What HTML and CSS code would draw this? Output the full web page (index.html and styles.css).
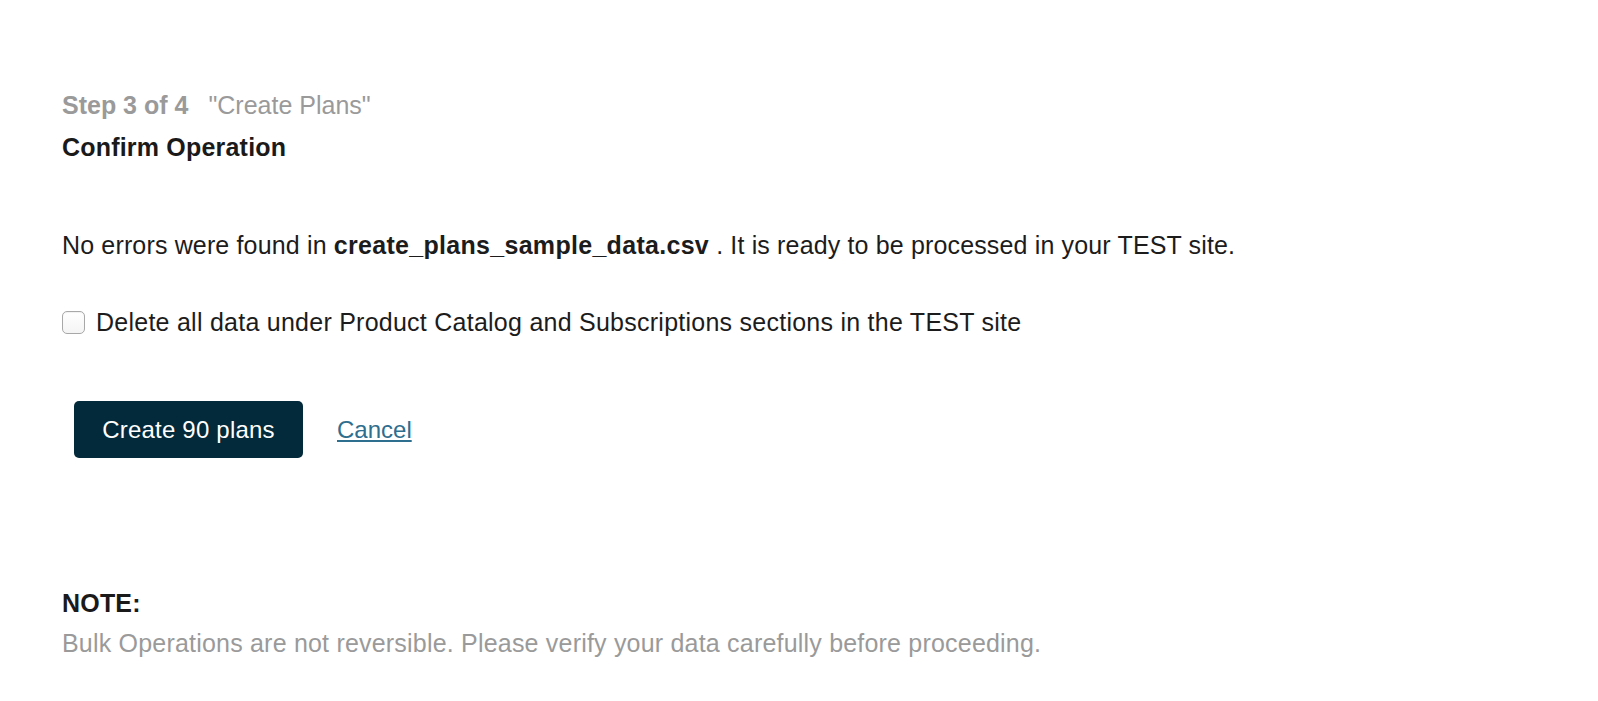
FILE: index.html
```html
<!DOCTYPE html>
<html lang="en">
<head>
<meta charset="utf-8">
<title>Confirm Operation</title>
<link rel="stylesheet" href="styles.css">
</head>
<body>
<main class="page">
  <div class="step"><span class="step-num">Step 3 of 4</span><span class="step-name">"Create Plans"</span></div>
  <h1 class="title">Confirm Operation</h1>
  <p class="message">No errors were found in <strong>create_plans_sample_data.csv</strong> . It is ready to be processed in your TEST site.</p>
  <label class="check-row"><input type="checkbox" class="check"><span>Delete all data under Product Catalog and Subscriptions sections in the TEST site</span></label>
  <div class="actions">
    <button class="btn-primary" type="button">Create 90 plans</button>
    <a class="cancel" href="#">Cancel</a>
  </div>
  <section class="note">
    <h2 class="note-title">NOTE:</h2>
    <p class="note-text">Bulk Operations are not reversible. Please verify your data carefully before proceeding.</p>
  </section>
</main>
</body>
</html>
```

FILE: styles.css
```css
html, body {
  margin: 0;
  padding: 0;
  background: #ffffff;
}
body {
  font-family: "Liberation Sans", Arial, sans-serif;
  font-size: 25px;
  letter-spacing: 0.2px;
  color: #1c1c1c;
}
.page {
  padding: 84px 0 0 62px;
}
.step {
  line-height: 42px;
  color: #9a9a9a;
  display: flex;
  gap: 20px;
  letter-spacing: 0;
}
.step-num {
  font-weight: bold;
}
.title {
  margin: 0;
  font-size: 25px;
  line-height: 42px;
  font-weight: bold;
  color: #1a1a1a;
}
.message {
  margin: 56px 0 0;
  line-height: 42px;
  letter-spacing: 0.15px;
}
.message strong {
  font-weight: bold;
  letter-spacing: 0.3px;
}
.check-row {
  margin-top: 35px;
  display: flex;
  align-items: center;
  gap: 11px;
  line-height: 42px;
  letter-spacing: 0.25px;
}
.check {
  appearance: none;
  -webkit-appearance: none;
  margin: 0;
  width: 23px;
  height: 23px;
  border: 1px solid #a8a8a8;
  border-radius: 5px;
  background: linear-gradient(#ffffff, #f4f4f4);
  box-shadow: inset 0 1px 1px rgba(0, 0, 0, 0.06);
  box-sizing: border-box;
}
.actions {
  margin: 58px 0 0 12px;
  display: flex;
  align-items: center;
  gap: 34px;
}
.btn-primary {
  width: 229px;
  height: 57px;
  border: none;
  border-radius: 5px;
  background: #032a3a;
  color: #ffffff;
  font-family: "Liberation Sans", Arial, sans-serif;
  font-size: 24px;
  letter-spacing: 0.2px;
  padding: 0;
}
.cancel {
  color: #2e6e8e;
  font-size: 24px;
  letter-spacing: 0;
  text-decoration: underline;
}
.note {
  margin-top: 125px;
  line-height: 40px;
}
.note-title {
  margin: 0;
  font-size: 25px;
  font-weight: bold;
  color: #1a1a1a;
}
.note-text {
  margin: 0;
  color: #9a9a9a;
}
```
